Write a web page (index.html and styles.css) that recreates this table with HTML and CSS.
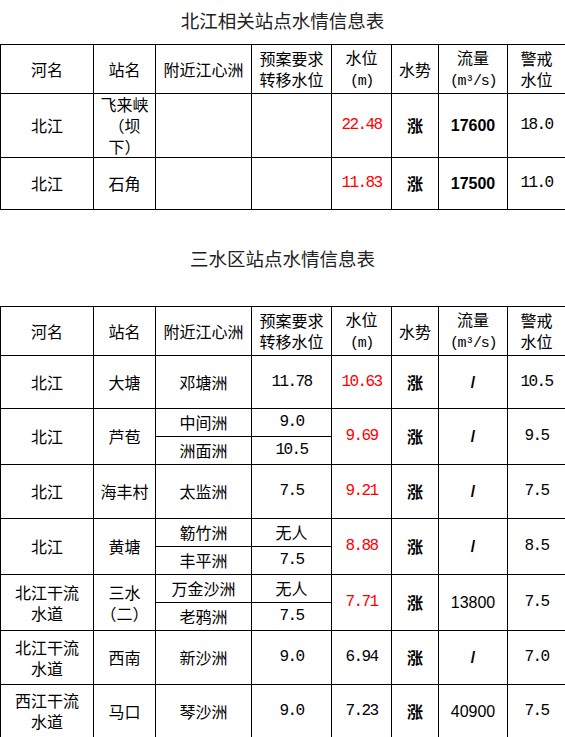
FILE: index.html
```html
<!DOCTYPE html>
<html lang="zh-CN">
<head>
<meta charset="utf-8">
<title>水情信息表</title>
<link rel="stylesheet" href="styles.css">
</head>
<body>
<h2 class="title title-first">北江相关站点水情信息表</h2>
<table class="info">
  <colgroup>
    <col class="c-river"><col class="c-station"><col class="c-isle"><col class="c-plan"><col class="c-level"><col class="c-trend"><col class="c-flow"><col class="c-warn">
  </colgroup>
  <tr class="r-head">
    <td>河名</td><td>站名</td><td>附近江心洲</td><td>预案要求转移水位</td><td>水位<br><span class="unit">(m)</span></td><td>水势</td><td>流量<br><span class="unit">(m³/s)</span></td><td class="warn">警戒水位</td>
  </tr>
  <tr class="r-64">
    <td>北江</td><td>飞来峡（坝下）</td><td></td><td></td><td class="num red">22.48</td><td class="rise">涨</td><td class="flow-b">17600</td><td class="num">18.0</td>
  </tr>
  <tr class="r-52">
    <td>北江</td><td>石角</td><td></td><td></td><td class="num red">11.83</td><td class="rise">涨</td><td class="flow-b">17500</td><td class="num">11.0</td>
  </tr>
</table>

<h2 class="title title-second">三水区站点水情信息表</h2>
<table class="info">
  <colgroup>
    <col class="c-river"><col class="c-station"><col class="c-isle"><col class="c-plan"><col class="c-level"><col class="c-trend"><col class="c-flow"><col class="c-warn">
  </colgroup>
  <tr class="r-head">
    <td>河名</td><td>站名</td><td>附近江心洲</td><td>预案要求转移水位</td><td>水位<br><span class="unit">(m)</span></td><td>水势</td><td>流量<br><span class="unit">(m³/s)</span></td><td class="warn">警戒水位</td>
  </tr>
  <tr class="r-53">
    <td>北江</td><td>大塘</td><td>邓塘洲</td><td class="num">11.78</td><td class="num red">10.63</td><td class="rise">涨</td><td class="slash">/</td><td class="num">10.5</td>
  </tr>
  <tr class="r-sub">
    <td rowspan="2">北江</td><td rowspan="2">芦苞</td><td>中间洲</td><td class="num">9.0</td><td rowspan="2" class="num red">9.69</td><td rowspan="2" class="rise">涨</td><td rowspan="2" class="slash">/</td><td rowspan="2" class="num">9.5</td>
  </tr>
  <tr class="r-sub">
    <td>洲面洲</td><td class="num">10.5</td>
  </tr>
  <tr class="r-54">
    <td>北江</td><td>海丰村</td><td>太监洲</td><td class="num">7.5</td><td class="num red">9.21</td><td class="rise">涨</td><td class="slash">/</td><td class="num">7.5</td>
  </tr>
  <tr class="r-sub">
    <td rowspan="2">北江</td><td rowspan="2">黄塘</td><td>簕竹洲</td><td>无人</td><td rowspan="2" class="num red">8.88</td><td rowspan="2" class="rise">涨</td><td rowspan="2" class="slash">/</td><td rowspan="2" class="num">8.5</td>
  </tr>
  <tr class="r-sub">
    <td>丰平洲</td><td class="num">7.5</td>
  </tr>
  <tr class="r-sub">
    <td rowspan="2" class="river">北江干流水道</td><td rowspan="2">三水（二）</td><td>万金沙洲</td><td>无人</td><td rowspan="2" class="num red">7.71</td><td rowspan="2" class="rise">涨</td><td rowspan="2" class="flow">13800</td><td rowspan="2" class="num">7.5</td>
  </tr>
  <tr class="r-sub">
    <td>老鸦洲</td><td class="num">7.5</td>
  </tr>
  <tr class="r-54">
    <td class="river">北江干流水道</td><td>西南</td><td>新沙洲</td><td class="num">9.0</td><td class="num">6.94</td><td class="rise">涨</td><td class="slash">/</td><td class="num">7.0</td>
  </tr>
  <tr class="r-53">
    <td class="river">西江干流水道</td><td>马口</td><td>琴沙洲</td><td class="num">9.0</td><td class="num">7.23</td><td class="rise">涨</td><td class="flow">40900</td><td class="num">7.5</td>
  </tr>
</table>
</body>
</html>
```

FILE: styles.css
```css
html, body {
  margin: 0;
  padding: 0;
  background: #fff;
}

body {
  font-family: "Noto Sans CJK SC", "Noto Sans", sans-serif;
  color: #000;
  width: 565px;
}

.title {
  margin: 0;
  height: 40px;
  line-height: 40px;
  font-size: 18.5px;
  font-weight: normal;
  text-align: center;
  color: #222;
}

.title-first {
  margin-bottom: 4px;
}

.title-second {
  margin-top: 28px;
  margin-bottom: 28px;
}

.info {
  border-collapse: collapse;
  table-layout: fixed;
  width: 565px;
}

.info td {
  border: 1px solid #000;
  padding: 0 4px;
  text-align: center;
  vertical-align: middle;
  font-size: 16px;
  line-height: 21px;
  overflow: hidden;
}

.info td.river,
.info td.warn {
  padding: 0 7px;
}

.c-river { width: 93px; }
.c-station { width: 62px; }
.c-isle { width: 96px; }
.c-plan { width: 80px; }
.c-level { width: 60px; }
.c-trend { width: 47px; }
.c-flow { width: 69px; }
.c-warn { width: 58px; }

.r-head { height: 49px; }
.r-64 { height: 64px; }
.r-52 { height: 52px; }
.r-53 { height: 53px; }
.r-54 { height: 54px; }
.r-sub { height: 28px; }

.unit {
  font-family: "Liberation Mono", "DejaVu Sans Mono", monospace;
  font-size: 15px;
  letter-spacing: -1.3px;
  white-space: nowrap;
}

.num {
  font-family: "Liberation Mono", "DejaVu Sans Mono", monospace;
  letter-spacing: -1.6px;
}

.red { color: #f00; }

.rise {
  font-weight: bold;
}

.flow-b {
  font-family: "Liberation Sans", Arial, sans-serif;
  font-weight: bold;
  font-size: 14px;
}

.flow {
  font-family: "Liberation Sans", Arial, sans-serif;
  font-size: 14px;
}

.slash {
  font-family: "Liberation Sans", Arial, sans-serif;
  font-weight: bold;
  font-size: 16px;
}
```
